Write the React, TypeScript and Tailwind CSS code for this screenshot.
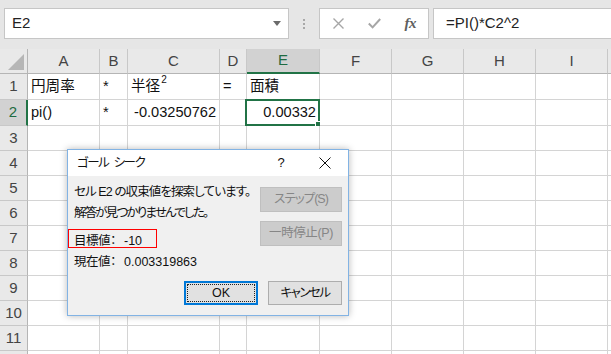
import React from "react";

const COLW = ["w-[72px]", "w-[28px]", "w-[92px]", "w-[27px]", "w-[73px]", "w-[72px]", "w-[72px]", "w-[72px]", "w-[72px]"];
const LETTERS = ["A", "B", "C", "D", "E", "F", "G", "H", "I"];
const ROWH = ["h-[26px]", "h-[26px]", "h-[25px]", "h-[25px]", "h-[25px]", "h-[25px]", "h-[25px]", "h-[25px]", "h-[25px]", "h-[25px]", "h-[25px]", "h-[25px]"];

type Cell = { text?: React.ReactNode; align?: "left" | "right" | "center" };

const DATA: Record<number, Record<number, Cell>> = {
  0: {
    0: { text: "円周率" },
    1: { text: "*" },
    2: {
      text: (
        <span className="flex items-start">
          <span>半径</span>
          <span className="text-[10px] leading-[10px] ml-[1px] -mt-[1px]">2</span>
        </span>
      ),
    },
    3: { text: "=" },
    4: { text: "面積" },
  },
  1: {
    0: { text: "pi()" },
    1: { text: "*" },
    2: { text: "-0.03250762", align: "right" },
    4: { text: "0.00332", align: "right" },
  },
};

function FormulaBar() {
  return (
    <div className="h-[49px] bg-[#e6e6e6] flex items-start pt-[8px]">
      <div className="ml-[4px] w-[285px] h-[31px] bg-white border border-[#c6c6c6] flex items-center pl-[7px] pr-[7px] shrink-0">
        <span className="text-[15px] text-[#222]">E2</span>
        <svg className="ml-auto" width="8" height="5" viewBox="0 0 8 5">
          <path d="M0 0 L8 0 L4 5 Z" fill="#6b6b6b" />
        </svg>
      </div>
      <div className="w-[30px] h-[31px] flex flex-col items-center justify-center gap-[2px] shrink-0">
        <div className="w-[2px] h-[2px] bg-[#a8a8a8]" />
        <div className="w-[2px] h-[2px] bg-[#a8a8a8]" />
        <div className="w-[2px] h-[2px] bg-[#a8a8a8]" />
      </div>
      <div className="w-[110px] h-[31px] bg-white border border-[#c6c6c6] flex items-center shrink-0">
        <div className="w-[36px] flex justify-center ml-[1px]">
          <svg width="11" height="11" viewBox="0 0 11 11">
            <path d="M0.5 0.5 L10.5 10.5 M10.5 0.5 L0.5 10.5" stroke="#a6a6a6" strokeWidth="1.4" />
          </svg>
        </div>
        <div className="w-[36px] flex justify-center">
          <svg width="13" height="11" viewBox="0 0 13 11">
            <path d="M0.8 5.5 L4.6 9.4 L12.2 1" stroke="#a6a6a6" strokeWidth="2" fill="none" />
          </svg>
        </div>
        <div className="w-[36px] flex justify-center">
          <span className="font-['Liberation_Serif',serif] italic font-bold text-[15px] text-[#5f5f5f] tracking-[-0.5px]">fx</span>
        </div>
      </div>
      <div className="ml-[4px] flex-1 h-[31px] bg-white border border-[#c6c6c6] border-r-0 flex items-center pl-[12px]">
        <span className="text-[15px] text-[#222]">=PI()*C2^2</span>
      </div>
    </div>
  );
}

function HeaderRow() {
  return (
    <div className="flex h-[25px]">
      <div className="w-[28px] shrink-0 bg-[#e9e9e9] border-r border-b border-[#b5b5b5] relative">
        <svg className="absolute left-[8px] top-[5px]" width="16" height="16" viewBox="0 0 16 16">
          <path d="M0 16 L16 0 L16 16 Z" fill="#b6b6b6" />
        </svg>
      </div>
      {LETTERS.map((l, i) => {
        const sel = i === 4;
        return (
          <div
            key={l}
            className={
              COLW[i] +
              " shrink-0 flex items-center justify-center text-[15px] border-r border-[#c8c8c8] " +
              (sel ? "bg-[#d2d2d2] text-[#1e6b41] border-b-2 border-b-[#217346]" : "bg-[#e9e9e9] text-[#444] border-b border-b-[#b5b5b5]")
            }
          >
            {l}
          </div>
        );
      })}
      <div className="flex-1 bg-[#e9e9e9] border-b border-[#b5b5b5]" />
    </div>
  );
}

function GridRow({ r }: { r: number }) {
  const row = DATA[r] || {};
  const selRow = r === 1;
  return (
    <div className={"flex " + ROWH[r]}>
      <div
        className={
          "w-[28px] shrink-0 flex items-center justify-center text-[15px] border-b border-[#c8c8c8] " +
          (selRow ? "bg-[#d2d2d2] text-[#1e6b41] border-r-2 border-r-[#217346]" : "bg-[#e9e9e9] text-[#444] border-r border-r-[#b5b5b5]")
        }
      >
        {r < 11 ? r + 1 : null}
      </div>
      {LETTERS.map((l, i) => {
        const c = row[i];
        const isSel = r === 1 && i === 4;
        return (
          <div
            key={l}
            className={
              COLW[i] +
              " shrink-0 relative flex items-center border-r border-b border-[#d4d4d4] bg-white text-[14.6px] text-[#111] whitespace-nowrap " +
              (c && c.align === "right" ? "justify-end pr-[3px]" : "justify-start pl-[3px]")
            }
          >
            {c ? c.text : null}
            {isSel && (
              <>
                <div className="absolute -left-[2px] -top-[1px] -right-[1px] -bottom-[1px] border-2 border-[#217346] pointer-events-none" />
                <div className="absolute -right-[2px] -bottom-[2px] w-[6px] h-[6px] bg-[#217346] border border-white" />
              </>
            )}
          </div>
        );
      })}
      <div className="flex-1 bg-white border-b border-[#d4d4d4]" />
    </div>
  );
}

function Dialog() {
  return (
    <div className="absolute left-[67px] top-[149px] w-[282px] h-[167px] border border-[#82b3e4] bg-[#f0f0f0] shadow-[0_0_7px_rgba(0,0,0,0.28)] font-['Liberation_Sans','Noto_Sans_CJK_JP',sans-serif] [font-feature-settings:'palt'] text-[#111]">
      <div className="h-[26px] bg-white flex items-center pl-[9px]">
        <span className="text-[12.5px] tracking-[-1.4px] flex gap-[5px]">
          <span>ゴール</span>
          <span>シーク</span>
        </span>
        <div className="flex-1" />
        <div className="w-[24px] flex justify-center mr-[9px] text-[13px]">?</div>
        <div className="w-[46px] flex justify-center">
          <svg width="12" height="12" viewBox="0 0 12 12">
            <path d="M0.5 0.5 L11.5 11.5 M11.5 0.5 L0.5 11.5" stroke="#111" strokeWidth="1" />
          </svg>
        </div>
      </div>
      <div className="flex h-[97px] pl-[6px] pr-[6px]">
        <div className="w-[180px] shrink-0 pt-[6px] leading-[21px] text-[12.5px] whitespace-nowrap">
          <div className="tracking-[-0.9px]">セル E2 の収束値を探索しています。</div>
          <div className="tracking-[-1.8px]">解答が見つかりませんでした。</div>
          <div className="flex mt-[7px]">
            <span className="w-[50px] tracking-[-0.5px]">目標値：</span>
            <span>-10</span>
          </div>
          <div className="flex">
            <span className="w-[50px] tracking-[-0.5px]">現在値：</span>
            <span>0.003319863</span>
          </div>
        </div>
        <div className="ml-auto flex flex-col gap-[9px] pt-[11px]">
          <div className="w-[82px] h-[25px] bg-[#cccccc] border border-[#bfbfbf] flex items-center justify-center text-[12.5px] text-[#868686] tracking-[-1px]">
            ステップ(S)
          </div>
          <div className="w-[82px] h-[25px] bg-[#cccccc] border border-[#bfbfbf] flex items-center justify-center text-[12.5px] text-[#868686] tracking-[-0.4px]">
            一時停止(P)
          </div>
        </div>
      </div>
      <div className="flex justify-end gap-[10px] pr-[6px] mt-[8px]">
        <div className="w-[74px] h-[24px] bg-[#e1e1e1] border-2 border-[#0078d7] p-[1px]">
          <div className="w-full h-full border border-dotted border-[#222] flex items-center justify-center text-[12.5px]">OK</div>
        </div>
        <div className="w-[74px] h-[24px] bg-[#e1e1e1] border border-[#adadad] flex items-center justify-center text-[12.5px] tracking-[-1.5px]">
          キャンセル
        </div>
      </div>
      <div className="absolute left-0 top-[79px] w-[89px] h-[19px] border border-[#ff0000]" />
    </div>
  );
}

export default function App() {
  return (
    <div className="w-[611px] h-[354px] overflow-hidden relative bg-white font-['Liberation_Sans','Noto_Sans_CJK_JP',sans-serif]">
      <FormulaBar />
      <HeaderRow />
      {ROWH.map((_, r) => (
        <GridRow key={r} r={r} />
      ))}
      <Dialog />
    </div>
  );
}
